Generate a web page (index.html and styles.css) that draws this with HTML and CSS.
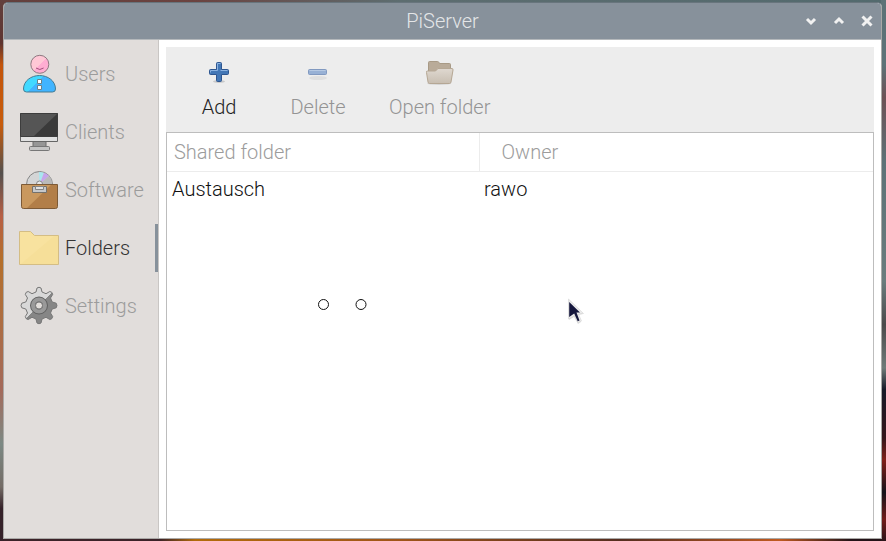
FILE: index.html
```html
<!DOCTYPE html>
<html lang="en">

<head>
  <meta charset="UTF-8">
  <title>PiServer</title>
  <link rel="stylesheet" href="styles.css">
</head>

<body>
  <div class="window">
    <header class="titlebar">
      <h1 class="title">PiServer</h1>
      <div class="window-buttons">
        <button type="button" aria-label="Minimize">
          <svg width="12" height="12" viewBox="0 0 12 12"><path d="M2 4l4 4 4-4" /></svg>
        </button>
        <button type="button" aria-label="Maximize">
          <svg width="12" height="12" viewBox="0 0 12 12"><path d="M2 8l4-4 4 4" /></svg>
        </button>
        <button type="button" aria-label="Close">
          <svg width="12" height="12" viewBox="0 0 12 12"><path d="M1.500 1.500l9 9M10.500 1.500l-9 9" /></svg>
        </button>
      </div>
    </header>

    <div class="main">
      <nav class="sidebar">
        <button type="button" class="nav-item">
          <svg width="40" height="40" viewBox="0 0 40 40">
            <defs>
              <linearGradient id="skin" x1="0" y1="0" x2="1" y2="1">
                <stop offset=".5" stop-color="#ffc8d6" />
                <stop offset=".5" stop-color="#ffadd2" />
              </linearGradient>
              <linearGradient id="shirt" x1="0" y1="0" x2="1" y2=".5">
                <stop offset=".5" stop-color="#41d9ff" />
                <stop offset=".5" stop-color="#41b4ff" />
              </linearGradient>
            </defs>
            <circle cx="20.800" cy="10.300" r="9" fill="url(#skin)" stroke="#8d7880" />
            <path d="M17 14q3.800 3 7.600 0" fill="none" stroke="#a4507c" />
            <path d="M4.500 35C4.500 27 12 21.500 20.500 21.500S36.500 27 36.500 35q0 3-3 3h-26q-3 0-3-3z" fill="url(#shirt)" stroke="#467b91" />
            <path d="M18.500 25.500h4v4h-4zM18.500 31.500h4v4h-4z" fill="#fff" stroke="#6c8088" />
          </svg>
          <span>Users</span>
        </button>
        <button type="button" class="nav-item">
          <svg width="40" height="40" viewBox="0 0 40 40">
            <path d="M14 29h13v6H14z" fill="#969696" stroke="#6b6b6b" />
            <rect x="10.500" y="34.500" width="20" height="4" rx="1" fill="#c4c4c4" stroke="#777" />
            <path d="M1.500 1.500h37v28h-37z" fill="#e1e1e1" stroke="#666" />
            <path d="M1.500 1.500h37v23h-37z" fill="#555" stroke="#3d3d3d" />
            <path d="M38 2v22H15z" fill="#3a3a3a" />
          </svg>
          <span>Clients</span>
        </button>
        <button type="button" class="nav-item">
          <svg width="40" height="40" viewBox="0 0 40 40">
            <circle cx="20.500" cy="14.500" r="13" fill="#d4d5d6" stroke="#858585" />
            <path d="M20.500 14.500L20 2q3 0 5 .8z" fill="#a9e6ef" />
            <path d="M20.500 14.500L25 2.800q3 1 5 3z" fill="#c6a5ea" />
            <path d="M20.500 14.500l9.500-8.700q3 3.500 3 8.700z" fill="#bababa" />
            <circle cx="20.500" cy="14" r="3" fill="#e7e7e7" stroke="#888" />
            <path d="M2.500 14.500h36v22q0 2-2 2h-32q-2 0-2-2z" fill="#b27e48" stroke="#7d5a36" />
            <path d="M3 15h29L8 38H5q-2 0-2-2z" fill="#c9985e" />
            <path d="M13.500 16.500h14v6h-14z" fill="#c6c8ca" stroke="#74716c" />
            <path d="M16.500 16.500h8v3h-8z" fill="#e2e2e2" stroke="#858585" />
          </svg>
          <span>Software</span>
        </button>
        <button type="button" class="nav-item active" aria-current="page">
          <svg width="40" height="40" viewBox="0 0 40 40">
            <path d="M.5 3.500h11l4 4h24v29H.5z" fill="#f6df99" stroke="#d4bd84" />
            <path d="M1 4h10l4 4h20L2 36H1z" fill="#f8e29f" />
          </svg>
          <span>Folders</span>
        </button>
        <button type="button" class="nav-item">
          <svg width="40" height="40" viewBox="0 0 40 40">
            <defs>
              <linearGradient id="metal" x1="0" y1="0" x2="1" y2="1">
                <stop offset=".5" stop-color="#d8d8d8" />
                <stop offset=".5" stop-color="#868686" />
              </linearGradient>
            </defs>
            <path d="M17 6l1-4q2-1.500 4 0l1 4 4 1.700L30.800 5.500q2.600.2 2.900 2.900L31.500 12l1.700 4 4 1.200q1.500 2.300 0 4.600l-4 1.200-1.700 4 2.200 3.600q-.3 2.700-2.900 2.900L27 31.300 23 33l-1 4q-2 1.500-4 0l-1-4-4-1.700-3.800 2.200q-2.600-.2-2.900-2.900L8.500 27l-1.700-4-4-1.200q-1.500-2.300 0-4.600l4-1.200 1.700-4-2.200-3.600q.3-2.700 2.900-2.900L13 7.700z" fill="url(#metal)" stroke="#777" stroke-linejoin="round" />
            <circle cx="20" cy="19.500" r="6" fill="none" stroke="#606060" stroke-width="6" />
            <circle cx="20" cy="19.500" r="6" fill="none" stroke="#999" stroke-width="4" />
            <circle cx="20" cy="19.500" r="3.500" fill="#e2dedb" stroke="#7a7a7a" />
          </svg>
          <span>Settings</span>
        </button>
      </nav>

      <main class="content">
        <div class="toolbar">
          <button type="button" class="tool">
            <svg width="28" height="26" viewBox="0 0 28 26">
              <ellipse cx="14" cy="21.500" rx="6" ry="1.500" fill="#000" opacity=".15" />
              <path d="M11.500 3.500q0-1 1-1h3q1 0 1 1v6h6q1 0 1 1v3q0 1-1 1h-6v6q0 1-1 1h-3q-1 0-1-1v-6h-6q-1 0-1-1v-3q0-1 1-1h6z" fill="#4377b6" stroke="#2e5690" />
              <path d="M12.500 10.500v-7h3M5.500 12.500v-2h7M15.500 10.500h7" fill="none" stroke="#8bb2e0" />
            </svg>
            <span>Add</span>
          </button>
          <button type="button" class="tool" disabled>
            <svg width="28" height="26" viewBox="0 0 28 26">
              <ellipse cx="14" cy="18" rx="9" ry="2" fill="#000" opacity=".06" />
              <rect x="4.500" y="9.500" width="18" height="5" rx="1" fill="#98b1d5" stroke="#8199c0" />
              <path d="M5.500 10.500h16" fill="none" stroke="#b6c9e3" />
            </svg>
            <span>Delete</span>
          </button>
          <button type="button" class="tool" disabled>
            <svg width="28" height="26" viewBox="0 0 28 26">
              <defs>
                <linearGradient id="flap" x1="0" y1="0" x2="0" y2="1">
                  <stop offset="0" stop-color="#dfd8d0" />
                  <stop offset="1" stop-color="#c8beb1" />
                </linearGradient>
              </defs>
              <ellipse cx="13" cy="23.500" rx="12" ry="1.500" fill="#000" opacity=".1" />
              <path d="M2.500 13.500v-11q0-1 1-1h8q1 0 1.500 1l.5 1h10q1 0 1 1v9z" fill="#b9ab99" stroke="#a89a86" />
              <path d="M.5 12.500q-.5-1.500 1-1.500h8l2.500-2.500h14q1.200 0 1 1.500l-2 12q-.2 1.500-1.500 1.500h-20q-1.300 0-1.500-1.500z" fill="url(#flap)" stroke="#b5a794" />
            </svg>
            <span>Open folder</span>
          </button>
        </div>

        <div class="list">
          <table class="folders">
            <thead>
              <tr>
                <th class="col-folder">Shared folder</th>
                <th class="col-owner">Owner</th>
              </tr>
            </thead>
            <tbody>
              <tr>
                <td>Austausch</td>
                <td>rawo</td>
              </tr>
            </tbody>
          </table>
          <svg class="dots" width="50" height="12" viewBox="0 0 50 12">
            <circle cx="6.500" cy="5.500" r="5" />
            <circle cx="44" cy="5.500" r="5" />
          </svg>
          <svg class="pointer" width="18" height="28" viewBox="0 0 18 28">
            <path d="M1 2l14 14-5 1 3 7-3 2-4-7-5 3z" fill="#aaa" opacity=".4" />
            <path d="M.5 1L15.500 15.500 10.500 16l3 7-3.500 1.500-3-7L.5 21z" fill="#ececec" stroke="#ccc" stroke-width=".5" />
            <path d="M1.200 4L12 14.500H8.500l3 8-1.800.7-3.500-7.700-5 3.500z" fill="#14163c" />
          </svg>
        </div>
      </main>
    </div>
  </div>
</body>

</html>
```
FILE: styles.css
```css
* {
  box-sizing: border-box;
}

body {
  margin: 0;
  height: 100vh;
  padding: 2px 4px 2px 3px;
  font-family: Roboto, sans-serif;
  font-size: 20px;
  font-weight: 300;
  line-height: 24px;
  background:
    linear-gradient(#63403d, #5e3430 8%, #c4550c 12%, #c85c0c 23%, #54504e 32%, #b86045 40%, #b5702b 48%, #a46a5b 72%, #7c8984 82%, #746c66 90%, #352129 94%) left / 4px 100% no-repeat,
    linear-gradient(#5d7277, #5d7277 12%, #6c5155 18%, #5d7277 30%, #6a7c7d 52%, #4b4a4b 60%, #6f7b79 68%, #171a28 72%, #34161b 81%, #802019 85%, #15131a 91%, #711b19 96%, #2b1419) right / 5px 100% no-repeat,
    linear-gradient(to right, #3b2228 18%, #b26b0a 22%, #a05519 45%, #552d1f 70%, #c05a20 88%, #231318 96%) bottom / 100% 3px no-repeat,
    linear-gradient(to right, #63403d, #6b4340 22%, #5d6d70 45%, #536a6e);
}

button {
  padding: 0;
  border: 0;
  background: none;
  color: inherit;
  font: inherit;
}

.window {
  display: flex;
  flex-direction: column;
  height: 100%;
  border: 1px solid #aaa9a7;
  border-top-color: #68757d;
  border-radius: 5px 5px 0 0;
  background: #fff;
  overflow: hidden;
}

.titlebar {
  display: grid;
  grid-template-columns: 1fr auto 1fr;
  align-items: center;
  height: 37px;
  background: #87919b;
  border-bottom: 1px solid #b4b8bb;
  color: #e4e6e8;
}

.title {
  grid-column: 2;
  margin: 0;
  font-size: 20px;
  font-weight: 300;
  line-height: 24px;
}

.window-buttons {
  display: flex;
  justify-content: flex-end;
  gap: 16px;
  padding-right: 8px;
}

.window-buttons svg {
  display: block;
  fill: none;
  stroke: #f1f1f1;
  stroke-width: 3;
}

.main {
  display: flex;
  flex: 1;
  min-height: 0;
}

.sidebar {
  display: grid;
  grid-auto-rows: 48px;
  align-content: start;
  gap: 10px;
  width: 155px;
  padding-top: 10px;
  background: #e1dddb;
  border-right: 1px solid #c9c6c4;
}

.nav-item {
  display: flex;
  align-items: center;
  gap: 6px;
  padding-left: 15px;
  border-right: 3px solid transparent;
  color: #9c9c9c;
}

.nav-item.active {
  border-right-color: #87919b;
  color: #333;
}

.content {
  display: flex;
  flex: 1;
  flex-direction: column;
  padding: 7px;
}

.toolbar {
  display: flex;
  gap: 7px;
  padding: 13px 7px;
  background: #ededed;
}

.tool {
  display: flex;
  flex-direction: column;
  align-items: center;
  gap: 9px;
  min-width: 92px;
  padding: 0 18px;
  color: #222;
}

.tool:disabled {
  color: #949494;
}

.list {
  position: relative;
  flex: 1;
  border: 1px solid #bdbdbd;
}

.folders {
  width: 100%;
  border-collapse: collapse;
  table-layout: fixed;
  text-align: left;
}

.folders th {
  height: 38px;
  padding: 0 7px;
  border-bottom: 1px solid #ececec;
  color: #9c9c9c;
  font-weight: 300;
}

.folders .col-folder {
  width: 312px;
  border-right: 1px solid #ececec;
}

.folders .col-owner {
  padding-left: 22px;
}

.folders td {
  height: 36px;
  padding: 0 5px;
  color: #111;
}

.dots {
  position: absolute;
  top: 166px;
  left: 150px;
  fill: none;
  stroke: #111;
}

.pointer {
  position: absolute;
  top: 165px;
  left: 401px;
}
```
